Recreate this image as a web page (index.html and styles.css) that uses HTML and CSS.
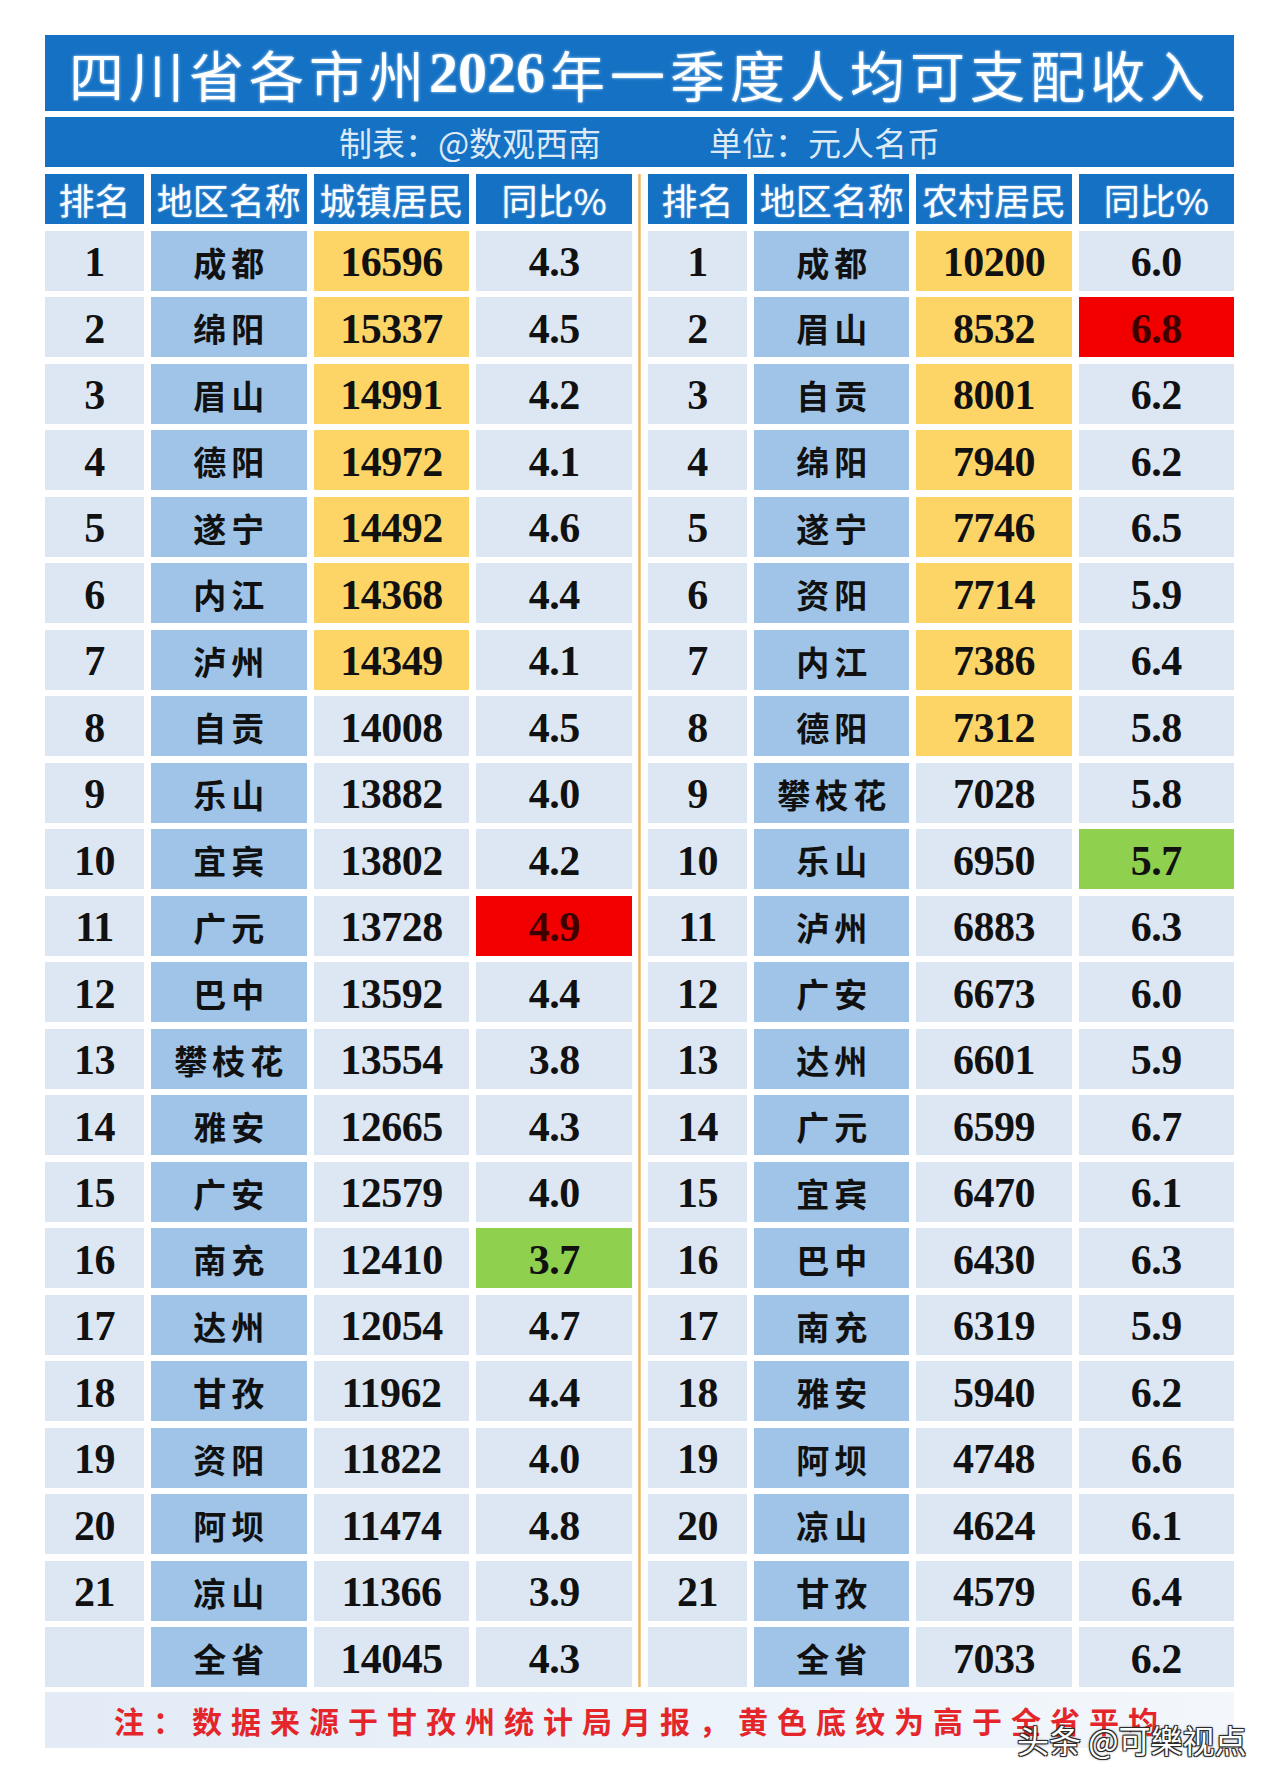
FILE: index.html
```html
<!DOCTYPE html>
<html lang="zh-CN">
<head>
<meta charset="utf-8">
<title>四川省各市州2026年一季度人均可支配收入</title>
<link rel="stylesheet" href="styles.css">
</head>
<body>
<div class="sheet">
  <div class="title">四川省各市州<span class="yr">2026</span>年一季度人均可支配收入</div>
  <div class="sub"><span>制表：@数观西南</span><span>单位：元人名币</span></div>
  <div class="body">
    <div class="half">
      <div class="h">排名</div><div class="h">地区名称</div><div class="h">城镇居民</div><div class="h">同比%</div>
      <div class="c">1</div><div class="n">成都</div><div class="c y">16596</div><div class="c">4.3</div>
      <div class="c">2</div><div class="n">绵阳</div><div class="c y">15337</div><div class="c">4.5</div>
      <div class="c">3</div><div class="n">眉山</div><div class="c y">14991</div><div class="c">4.2</div>
      <div class="c">4</div><div class="n">德阳</div><div class="c y">14972</div><div class="c">4.1</div>
      <div class="c">5</div><div class="n">遂宁</div><div class="c y">14492</div><div class="c">4.6</div>
      <div class="c">6</div><div class="n">内江</div><div class="c y">14368</div><div class="c">4.4</div>
      <div class="c">7</div><div class="n">泸州</div><div class="c y">14349</div><div class="c">4.1</div>
      <div class="c">8</div><div class="n">自贡</div><div class="c">14008</div><div class="c">4.5</div>
      <div class="c">9</div><div class="n">乐山</div><div class="c">13882</div><div class="c">4.0</div>
      <div class="c">10</div><div class="n">宜宾</div><div class="c">13802</div><div class="c">4.2</div>
      <div class="c">11</div><div class="n">广元</div><div class="c">13728</div><div class="c r">4.9</div>
      <div class="c">12</div><div class="n">巴中</div><div class="c">13592</div><div class="c">4.4</div>
      <div class="c">13</div><div class="n">攀枝花</div><div class="c">13554</div><div class="c">3.8</div>
      <div class="c">14</div><div class="n">雅安</div><div class="c">12665</div><div class="c">4.3</div>
      <div class="c">15</div><div class="n">广安</div><div class="c">12579</div><div class="c">4.0</div>
      <div class="c">16</div><div class="n">南充</div><div class="c">12410</div><div class="c g">3.7</div>
      <div class="c">17</div><div class="n">达州</div><div class="c">12054</div><div class="c">4.7</div>
      <div class="c">18</div><div class="n">甘孜</div><div class="c">11962</div><div class="c">4.4</div>
      <div class="c">19</div><div class="n">资阳</div><div class="c">11822</div><div class="c">4.0</div>
      <div class="c">20</div><div class="n">阿坝</div><div class="c">11474</div><div class="c">4.8</div>
      <div class="c">21</div><div class="n">凉山</div><div class="c">11366</div><div class="c">3.9</div>
      <div class="c"></div><div class="n">全省</div><div class="c">14045</div><div class="c">4.3</div>
    </div>
    <div class="divider"></div>
    <div class="half">
      <div class="h">排名</div><div class="h">地区名称</div><div class="h">农村居民</div><div class="h">同比%</div>
      <div class="c">1</div><div class="n">成都</div><div class="c y">10200</div><div class="c">6.0</div>
      <div class="c">2</div><div class="n">眉山</div><div class="c y">8532</div><div class="c r">6.8</div>
      <div class="c">3</div><div class="n">自贡</div><div class="c y">8001</div><div class="c">6.2</div>
      <div class="c">4</div><div class="n">绵阳</div><div class="c y">7940</div><div class="c">6.2</div>
      <div class="c">5</div><div class="n">遂宁</div><div class="c y">7746</div><div class="c">6.5</div>
      <div class="c">6</div><div class="n">资阳</div><div class="c y">7714</div><div class="c">5.9</div>
      <div class="c">7</div><div class="n">内江</div><div class="c y">7386</div><div class="c">6.4</div>
      <div class="c">8</div><div class="n">德阳</div><div class="c y">7312</div><div class="c">5.8</div>
      <div class="c">9</div><div class="n">攀枝花</div><div class="c">7028</div><div class="c">5.8</div>
      <div class="c">10</div><div class="n">乐山</div><div class="c">6950</div><div class="c g">5.7</div>
      <div class="c">11</div><div class="n">泸州</div><div class="c">6883</div><div class="c">6.3</div>
      <div class="c">12</div><div class="n">广安</div><div class="c">6673</div><div class="c">6.0</div>
      <div class="c">13</div><div class="n">达州</div><div class="c">6601</div><div class="c">5.9</div>
      <div class="c">14</div><div class="n">广元</div><div class="c">6599</div><div class="c">6.7</div>
      <div class="c">15</div><div class="n">宜宾</div><div class="c">6470</div><div class="c">6.1</div>
      <div class="c">16</div><div class="n">巴中</div><div class="c">6430</div><div class="c">6.3</div>
      <div class="c">17</div><div class="n">南充</div><div class="c">6319</div><div class="c">5.9</div>
      <div class="c">18</div><div class="n">雅安</div><div class="c">5940</div><div class="c">6.2</div>
      <div class="c">19</div><div class="n">阿坝</div><div class="c">4748</div><div class="c">6.6</div>
      <div class="c">20</div><div class="n">凉山</div><div class="c">4624</div><div class="c">6.1</div>
      <div class="c">21</div><div class="n">甘孜</div><div class="c">4579</div><div class="c">6.4</div>
      <div class="c"></div><div class="n">全省</div><div class="c">7033</div><div class="c">6.2</div>
    </div>
  </div>
  <div class="note">注：数据来源于甘孜州统计局月报，黄色底纹为高于全省平均</div>
  <div class="wm">头条 @可樂视点</div>
</div>
</body>
</html>
```

FILE: styles.css
```css
* { box-sizing: border-box; }
html, body {
  margin: 0;
  background: #ffffff;
}
body {
  min-height: 1784px;
  padding-top: 35px;
  font-family: "Noto Sans CJK SC", "Noto Sans", sans-serif;
}
.sheet {
  position: relative;
  width: 1189px;
  margin: 0 0 36px 45px;
}
.title {
  height: 76px;
  background: #1571c3;
  color: #ffffff;
  font-size: 55px;
  font-weight: 400;
  letter-spacing: 5px;
  display: flex;
  align-items: center;
  justify-content: center;
  line-height: 1;
  text-shadow: 0 0 3px #b9dcff;
}
.title .yr {
  font-family: "Liberation Serif", serif;
  font-weight: 700;
  font-size: 58px;
  letter-spacing: 0;
  margin-right: 5px;
}
.sub {
  margin-top: 6px;
  height: 50px;
  background: #1571c3;
  color: #dce9f7;
  font-size: 33px;
  display: flex;
  align-items: center;
  justify-content: center;
  gap: 108px;
  line-height: 1;
}
.body {
  margin-top: 7px;
  display: grid;
  grid-template-columns: 587px 16px 586px;
}
.half {
  display: grid;
  grid-template-columns: 99px repeat(3, 1fr);
  grid-template-rows: 50px repeat(22, 60px);
  column-gap: 7px;
  row-gap: 6.5px;
}
.divider {
  background: linear-gradient(to right, transparent 6px, #f6d6a4 6px, #f0b25e 7.5px, #f6d6a4 9px, transparent 9px);
}
.h {
  background: #1571c3;
  color: #ffffff;
  font-size: 36px;
  font-weight: 400;
  display: flex;
  align-items: center;
  justify-content: center;
  line-height: 1;
  white-space: nowrap;
  text-shadow: 0 0 2px #a8d2ff;
}
.c, .n {
  display: flex;
  align-items: center;
  justify-content: center;
  line-height: 1;
  color: #111111;
}
.c {
  background: #dde7f4;
  font-family: "Liberation Serif", serif;
  font-weight: 700;
  font-size: 42px;
  letter-spacing: -0.5px;
  padding-top: 3px;
}
.n {
  background: #9fc4e7;
  font-size: 33px;
  font-weight: 700;
  letter-spacing: 5px;
  padding-left: 5px;
  padding-top: 3px;
}
.y { background: #fdd567; }
.r { background: #f20000; color: #3d0000; }
.g { background: #8fd04e; }
.note {
  margin-top: 5px;
  height: 56px;
  background: linear-gradient(to right, #e2ebf6, #edf3fa 60%, #f3f7fc);
  color: #e4262b;
  font-size: 30px;
  font-weight: 700;
  letter-spacing: 9px;
  display: flex;
  align-items: center;
  padding-left: 69px;
  line-height: 1;
  white-space: nowrap;
}
.wm {
  position: absolute;
  z-index: 2;
  left: 972px;
  top: 1688px;
  color: #ffffff;
  font-size: 32px;
  line-height: 1;
  white-space: nowrap;
  text-shadow: -1px -1px 0 #2b2b2b, 1px -1px 0 #2b2b2b, -1px 1px 0 #2b2b2b, 1px 1px 0 #2b2b2b, 0 0 3px #000000;
}
```
